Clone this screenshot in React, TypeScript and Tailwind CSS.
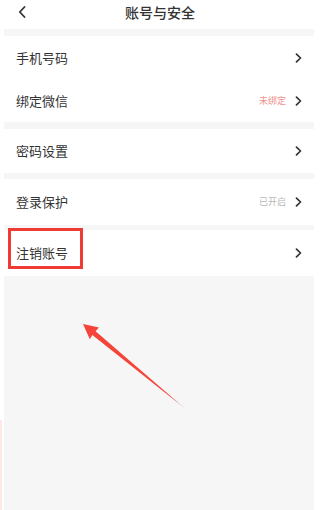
import React from "react";

const Chevron = () => (
  <svg width="7" height="10" viewBox="0 0 7 10" className="shrink-0">
    <path d="M1.5 1.2 L5.5 5 L1.5 8.8" fill="none" stroke="#333" strokeWidth="1.7" strokeLinecap="round" strokeLinejoin="round" />
  </svg>
);

type RowProps = { label: string; h: string; value?: string; valueClass?: string };

const Row = ({ label, h, value, valueClass }: RowProps) => (
  <div className={`flex items-center justify-between pl-[12px] pr-[12px] bg-white ${h}`}>
    <span className="text-[13px] text-[#333]">{label}</span>
    <div className="flex items-center gap-[9px]">
      {value && <span className={`text-[9px] ${valueClass}`}>{value}</span>}
      <Chevron />
    </div>
  </div>
);

export default function App() {
  return (
    <div
      className="relative w-[320px] h-[510px] bg-white overflow-hidden pl-[4px] pr-[6px]"
      style={{ fontFamily: '"Noto Sans CJK SC", "Noto Sans", sans-serif' }}
    >
      <div className="h-full bg-[#f6f6f6] flex flex-col">
        <div className="h-[29px] bg-white flex items-center relative">
          <svg width="8" height="12" viewBox="0 0 8 12" className="absolute left-[14px] top-[6px]">
            <path d="M6.5 1 L1.8 6 L6.5 11" fill="none" stroke="#333" strokeWidth="1.8" strokeLinecap="round" strokeLinejoin="round" />
          </svg>
          <div className="w-full text-center text-[14px] text-[#333] font-medium leading-none -mt-[5px] pl-[2px]">账号与安全</div>
        </div>
        <div className="mt-[7px] bg-white">
          <Row label="手机号码" h="h-[43px]" />
          <Row label="绑定微信" h="h-[43px]" value="未绑定" valueClass="text-[#f0908a]" />
        </div>
        <div className="mt-[7px] bg-white">
          <Row label="密码设置" h="h-[44px]" />
        </div>
        <div className="mt-[6px] bg-white">
          <Row label="登录保护" h="h-[46px]" value="已开启" valueClass="text-[#b8b8b8]" />
        </div>
        <div className="mt-[5px] bg-white">
          <Row label="注销账号" h="h-[46px]" />
        </div>
      </div>

      <div className="absolute left-[8px] top-[228px] w-[75px] h-[41px] border-[3px] border-[#ee3b33]" />

      <svg className="absolute left-0 top-0 pointer-events-none" width="320" height="510" viewBox="0 0 320 510">
        <defs>
          <linearGradient id="tailg" x1="83" y1="324" x2="185" y2="408" gradientUnits="userSpaceOnUse">
            <stop offset="0" stopColor="#f5453a" />
            <stop offset="0.85" stopColor="#f5453a" />
            <stop offset="1" stopColor="#b9a8a8" />
          </linearGradient>
        </defs>
        <polygon
          points="83,324 99,327.5 95.6,331.2 185,408.5 92.3,335 89.8,339.3"
          fill="url(#tailg)"
        />
      </svg>
      <div className="absolute left-0 top-[420px] w-[2px] h-[90px] bg-[#fde8e6]" />
    </div>
  );
}
